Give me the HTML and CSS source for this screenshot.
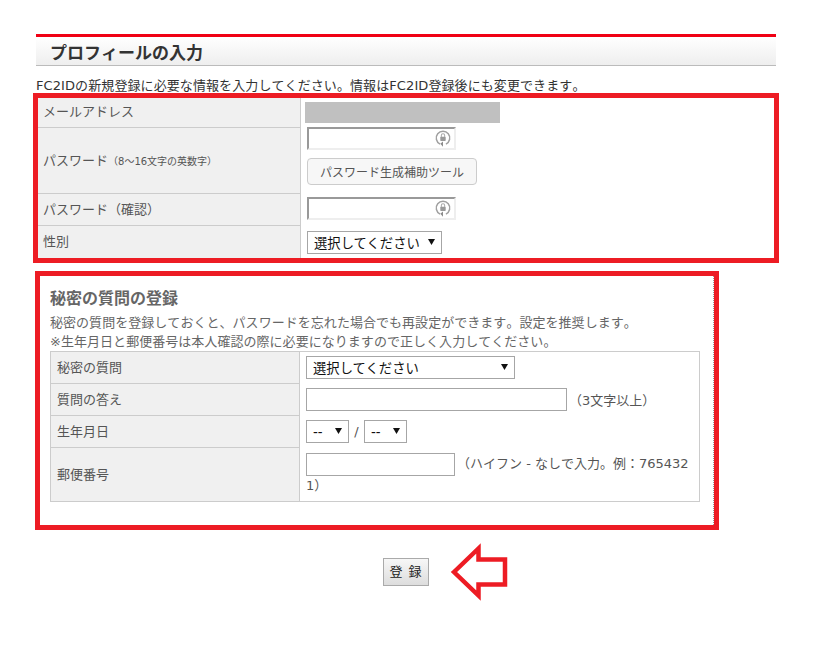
FILE: index.html
```html
<!DOCTYPE html>
<html lang="ja">
<head>
<meta charset="utf-8">
<title>プロフィールの入力</title>
<link rel="stylesheet" href="styles.css">
</head>
<body>
<main class="page">
  <h1 class="heading">プロフィールの入力</h1>
  <p class="lead">FC2IDの新規登録に必要な情報を入力してください。情報はFC2ID登録後にも変更できます。</p>

  <section class="box box-profile">
    <table class="form form-profile">
      <tr class="r-mail">
        <th>メールアドレス</th>
        <td><div class="masked"></div></td>
      </tr>
      <tr class="r-pass">
        <th>パスワード<small>（8～16文字の英数字）</small></th>
        <td>
          <div class="stack">
            <div class="pw">
              <input type="password" class="pw-input">
              <svg class="pw-icon" viewBox="0 0 16 16"><path d="M5.4 13.4A6 6 0 1 1 10.6 13.4" fill="none" stroke="#a0a0a0" stroke-width="1.3"/><path d="M5.6 13L8 15.8V11.2Z" fill="#8c8c8c"/><rect x="5.6" y="6.9" width="4.8" height="3.8" rx=".6" fill="#999"/><path d="M6.5 7V5.8a1.5 1.5 0 0 1 3 0V7" fill="none" stroke="#a8a8a8" stroke-width=".9"/></svg>
            </div>
            <button type="button" class="tool">パスワード生成補助ツール</button>
          </div>
        </td>
      </tr>
      <tr class="r-conf">
        <th>パスワード（確認）</th>
        <td>
          <div class="pw">
            <input type="password" class="pw-input">
            <svg class="pw-icon" viewBox="0 0 16 16"><path d="M5.4 13.4A6 6 0 1 1 10.6 13.4" fill="none" stroke="#a0a0a0" stroke-width="1.3"/><path d="M5.6 13L8 15.8V11.2Z" fill="#8c8c8c"/><rect x="5.6" y="6.9" width="4.8" height="3.8" rx=".6" fill="#999"/><path d="M6.5 7V5.8a1.5 1.5 0 0 1 3 0V7" fill="none" stroke="#a8a8a8" stroke-width=".9"/></svg>
          </div>
        </td>
      </tr>
      <tr class="r-sex">
        <th>性別</th>
        <td><select class="sel sel-sex"><option>選択してください</option></select></td>
      </tr>
    </table>
  </section>

  <section class="box box-secret">
    <div class="secret-inner">
      <h2 class="sub">秘密の質問の登録</h2>
      <p class="note">秘密の質問を登録しておくと、パスワードを忘れた場合でも再設定ができます。設定を推奨します。<br>※生年月日と郵便番号は本人確認の際に必要になりますので正しく入力してください。</p>
      <table class="form form-secret">
        <tr>
          <th>秘密の質問</th>
          <td><select class="sel sel-q"><option>選択してください</option></select></td>
        </tr>
        <tr>
          <th>質問の答え</th>
          <td><div class="inline"><input type="text" class="txt txt-a"><span class="hint">（3文字以上）</span></div></td>
        </tr>
        <tr>
          <th>生年月日</th>
          <td><div class="inline"><select class="sel sel-d"><option>--</option></select><span class="slash">/</span><select class="sel sel-d"><option>--</option></select></div></td>
        </tr>
        <tr class="r-zip">
          <th>郵便番号</th>
          <td><input type="text" class="txt txt-z"><span class="hint">（ハイフン - なしで入力。例：7654321）</span></td>
        </tr>
      </table>
    </div>
  </section>

  <div class="submit">
    <button type="button" class="go">登 録</button>
    <svg class="arrow" viewBox="0 0 64 60"><path d="M6 29L30.5 5.5V16.5H57V41.5H30.5V52.5Z" fill="#fff" stroke="#ed1c24" stroke-width="4.5"/></svg>
  </div>
</main>
</body>
</html>
```

FILE: styles.css
```css
* { box-sizing: border-box; }
html, body { margin: 0; background: #fff; }
body {
  font-family: "DejaVu Sans", "Noto Sans CJK JP", sans-serif;
  font-size: 13px;
  font-kerning: none;
  text-spacing-trim: space-all;
  color: #333;
}
.page { width: 740px; margin-left: 36px; padding-top: 34px; }

.heading {
  margin: 0;
  height: 32px;
  padding-left: 14px;
  border-top: 3px solid #f00014;
  border-bottom: 1px solid #bbb;
  background: linear-gradient(#fff, #eee);
  font-size: 17px;
  line-height: 32px;
  font-weight: 700;
  color: #333;
}
.lead { margin: 0; padding-top: 12px; height: 27px; line-height: 15px; font-size: 13px; letter-spacing: .09px; white-space: nowrap; }

.box { border: 5px solid #ed1c24; background: #fff; }
.box-profile { margin: 0 -3px; height: 170px; }
.box-secret {
  width: 684px;
  height: 259px;
  margin: 8px 0 0 -1px;
}
.secret-inner {
  height: 100%;
  padding: 14px 0 0 10px;
  border-right: 1px dotted #999;
}

.form { border-collapse: separate; border-spacing: 0; table-layout: fixed; }
.form th {
  background: #f0f0f0;
  font-weight: 400;
  text-align: left;
  color: #555;
  padding: 0 0 3px 5px;
  border-right: 1px solid #ccc;
  border-bottom: 1px solid #ccc;
  white-space: nowrap;
}
.form td { padding: 0 0 0 6px; vertical-align: top; }
.form small { font-size: 10px; }

.form-profile { width: 736px; }
.form-profile th { width: 263px; }
.form-profile tr:last-child th { border-bottom: 0; }
.r-mail { height: 30px; }
.r-pass { height: 66px; }
.r-conf { height: 32px; }
.r-sex { height: 32px; }
.form-profile .r-mail th { padding-bottom: 5px; }
.r-mail td { padding-top: 4px; }
.r-pass td { padding-top: 0; }
.r-conf td { padding-top: 3px; }
.r-sex td { padding-top: 5px; }

.masked { width: 195px; height: 21px; margin-left: -2px; background: #c0c0c0; }
.stack { display: flex; flex-direction: column; align-items: flex-start; gap: 8px; margin-top: -1px; }
.pw { position: relative; width: 149px; height: 23px; }
.pw-input {
  display: block;
  width: 100%;
  height: 100%;
  padding: 0 24px 0 2px;
  border: 2px solid;
  border-color: #999 #eee #eee #999;
  background: #fff;
  outline: 0;
}
.pw-icon { position: absolute; right: 4px; top: 2px; width: 18px; height: 18px; }
.tool {
  width: 170px;
  height: 27px;
  padding: 0;
  border: 1px solid #ccc;
  border-radius: 4px;
  background: #f7f7f7;
  color: #555;
  font: 12px "DejaVu Sans", "Noto Sans CJK JP", sans-serif;
}

.sel {
  display: block;
  appearance: none;
  height: 23px;
  padding: 2px 0 0 6px;
  border: 1px solid #a6a6a6;
  border-radius: 0;
  background: #fff url("data:image/svg+xml,%3Csvg xmlns='http://www.w3.org/2000/svg' width='7' height='6'%3E%3Cpath d='M0 0H7L3.5 6Z' fill='%23111'/%3E%3C/svg%3E") no-repeat right 6px top 7px;
  color: #111;
  font: 13.33px "DejaVu Sans", "Noto Sans CJK JP", sans-serif;
  line-height: 19px;
}
.sel-sex { width: 135px; }
.sel-q { width: 209px; }
.sel-d { width: 43px; }

.sub { margin: 0; height: 16px; font-size: 16px; line-height: 18px; font-weight: 700; color: #666; }
.note { margin: 7px 0 0; font-size: 13px; line-height: 19px; letter-spacing: .04px; color: #666; white-space: nowrap; }

.form-secret { width: 650px; border: 1px solid #ccc; }
.form-secret th { width: 249px; padding-left: 6px; height: 32px; }
.form-secret tr:last-child th { border-bottom: 0; }
.form-secret td { padding-top: 4px; }
.r-zip th { height: 53px !important; }
.r-zip td { padding-top: 5px; padding-right: 8px; line-height: 20px; word-break: break-all; color: #555; }

.inline { display: flex; align-items: center; }
.txt { height: 23px; padding: 0 2px; border: 1px solid #a6a6a6; background: #fff; outline: 0; }
.txt-a { width: 261px; }
.txt-z { width: 149px; vertical-align: middle; }
.hint { color: #555; margin-left: 2px; }
.slash { width: 15px; text-align: center; color: #555; }

.submit { position: relative; height: 70px; margin-top: 28px; text-align: center; }
.go {
  display: block;
  width: 46px;
  height: 28px;
  margin: 0 auto;
  padding: 0 0 3px;
  border: 1px solid #aaa;
  background: linear-gradient(#f7f7f7, #ddd);
  color: #222;
  font: 13px "DejaVu Sans", "Noto Sans CJK JP", sans-serif;
  letter-spacing: 1px;
}
.arrow { position: absolute; left: 412px; top: -15px; width: 64px; height: 60px; }
```
